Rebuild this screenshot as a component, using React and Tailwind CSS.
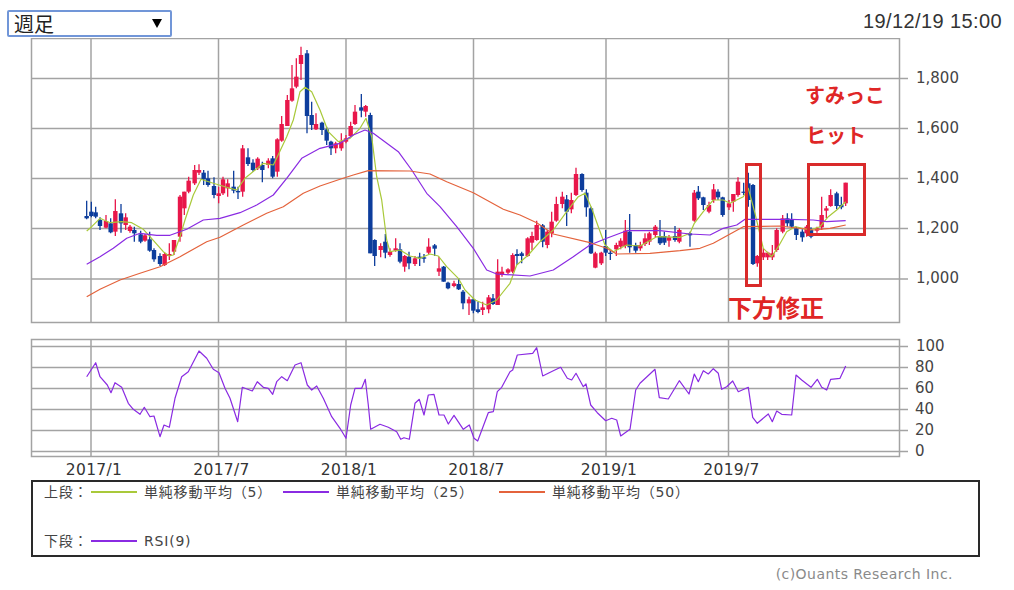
import React from "react";

// values below were read off 3x crops, so each block carries its own crop offset
const crop = (ox, oy, pts) => pts.map(([x, y]) => [x / 3 + ox, y / 3 + oy]);
const cropCandles = (ox, oy, rows) =>
  rows.map(([x, hi, lo, top, bot, c]) => ({
    x: x / 3 + ox,
    hi: hi / 3 + oy,
    lo: lo / 3 + oy,
    top: top / 3 + oy,
    bot: bot / 3 + oy,
    c,
  }));

const candles = [
  ...cropCandles(0, 130, [
    [260, 212, 268, 258, 265, "b"], [274, 215, 262, 245, 258, "b"], [287, 230, 265, 247, 260, "b"],
    [300, 262, 300, 270, 288, "b"], [318, 255, 295, 273, 293, "r"], [332, 265, 310, 280, 307, "b"],
    [346, 208, 318, 243, 305, "r"], [363, 222, 308, 250, 280, "b"], [377, 250, 300, 262, 285, "r"],
    [390, 285, 308, 290, 303, "r"], [403, 290, 335, 300, 310, "b"], [422, 302, 340, 313, 335, "b"],
    [435, 312, 335, 316, 332, "r"], [449, 305, 365, 328, 362, "b"], [462, 355, 395, 360, 388, "b"],
    [480, 370, 408, 378, 402, "b"], [494, 368, 408, 372, 405, "r"], [508, 340, 390, 372, 378, "r"],
    [522, 330, 375, 330, 365, "r"], [540, 195, 335, 200, 320, "r"], [553, 185, 255, 185, 235, "r"],
    [566, 140, 190, 152, 185, "r"], [584, 105, 165, 120, 160, "r"], [597, 103, 135, 120, 128, "r"],
    [611, 120, 165, 128, 148, "b"], [624, 122, 170, 145, 165, "b"], [642, 142, 205, 168, 195, "b"],
    [656, 170, 220, 190, 198, "r"], [669, 140, 195, 148, 190, "r"], [683, 148, 200, 160, 175, "r"],
    [701, 122, 190, 170, 182, "b"], [714, 170, 207, 183, 187, "b"], [728, 45, 200, 55, 185, "r"],
    [744, 55, 108, 82, 102, "b"], [759, 88, 125, 98, 120, "b"], [773, 82, 120, 86, 115, "r"],
    [787, 95, 157, 105, 120, "b"], [805, 85, 115, 92, 105, "r"], [818, 78, 145, 85, 140, "b"],
  ]),
  ...cropCandles(0, 0, [
    [832, 415, 530, 418, 515, "r"], [845, 348, 425, 372, 422, "r"], [862, 285, 378, 300, 378, "r"],
    [876, 195, 305, 265, 302, "r"], [889, 175, 265, 230, 260, "r"], [903, 140, 240, 165, 192, "r"],
    [921, 150, 400, 160, 348, "b"], [935, 305, 390, 345, 375, "b"], [948, 340, 390, 372, 388, "r"],
    [966, 365, 405, 368, 390, "b"], [980, 380, 435, 388, 422, "b"], [993, 422, 465, 425, 445, "b"],
    [1007, 425, 460, 430, 445, "r"],
  ]),
  ...cropCandles(340, 0, [
    [4, 400, 452, 425, 445, "r"], [18, 405, 430, 415, 425, "r"], [32, 365, 410, 378, 408, "r"],
    [45, 315, 375, 335, 372, "r"], [64, 282, 352, 322, 332, "b"], [77, 315, 350, 318, 335, "r"],
    [91, 338, 760, 345, 760, "b"], [104, 718, 798, 720, 768, "b"], [122, 730, 772, 738, 750, "r"],
    [136, 702, 775, 725, 758, "b"], [150, 745, 770, 755, 765, "r"], [167, 715, 755, 745, 752, "r"],
    [180, 730, 790, 748, 785, "b"], [194, 765, 815, 768, 800, "r"], [207, 755, 808, 770, 790, "b"],
    [225, 768, 798, 775, 792, "r"], [239, 758, 798, 770, 775, "b"], [252, 762, 788, 772, 776, "b"],
    [266, 715, 762, 740, 758, "r"], [284, 732, 768, 736, 746, "b"], [297, 770, 828, 805, 815, "r"],
    [311, 798, 845, 800, 845, "b"], [324, 845, 868, 848, 865, "b"], [342, 842, 862, 850, 858, "r"],
    [356, 835, 870, 852, 868, "b"], [369, 870, 928, 875, 910, "b"], [387, 890, 945, 898, 910, "r"],
    [400, 895, 940, 898, 932, "b"], [414, 905, 940, 928, 936, "b"], [428, 905, 945, 922, 930, "r"],
    [446, 885, 940, 892, 928, "r"], [459, 882, 915, 895, 912, "b"], [473, 778, 915, 815, 915, "r"],
    [486, 800, 830, 815, 825, "r"], [504, 805, 822, 808, 818, "r"], [518, 760, 820, 765, 815, "r"],
    [531, 748, 795, 762, 768, "b"], [545, 755, 790, 760, 768, "b"], [563, 712, 770, 715, 768, "r"],
    [576, 695, 750, 708, 728, "r"], [590, 662, 722, 675, 720, "r"], [608, 672, 742, 676, 725, "b"],
    [622, 690, 745, 695, 735, "r"], [635, 635, 712, 665, 700, "r"], [649, 590, 665, 612, 662, "r"],
    [667, 575, 625, 590, 612, "r"], [680, 585, 678, 598, 635, "b"], [694, 578, 640, 600, 628, "r"],
    [708, 503, 588, 522, 585, "r"], [726, 520, 575, 522, 570, "b"], [739, 568, 650, 578, 622, "b"],
    [753, 620, 762, 625, 760, "b"], [766, 755, 805, 760, 803, "r"], [784, 755, 795, 758, 790, "r"],
    [797, 690, 768, 738, 758, "b"], [811, 748, 780, 758, 762, "b"], [829, 728, 768, 735, 748, "r"],
    [842, 715, 748, 722, 740, "r"], [856, 660, 745, 692, 738, "r"], [869, 642, 758, 695, 742, "b"],
    [887, 728, 758, 735, 752, "b"], [901, 725, 752, 735, 745, "r"], [915, 700, 738, 715, 732, "r"],
    [928, 695, 735, 700, 725, "r"], [946, 675, 712, 680, 705, "r"], [960, 660, 735, 708, 730, "b"],
    [973, 695, 735, 708, 728, "b"], [987, 705, 740, 712, 722, "r"], [1005, 678, 725, 708, 720, "b"],
    [1018, 685, 730, 690, 725, "r"],
  ]),
  ...cropCandles(680, 0, [
    [30, 695, 740, 700, 706, "b"], [43, 570, 665, 578, 662, "r"], [55, 558, 600, 575, 595, "b"],
    [70, 590, 630, 592, 615, "b"], [87, 605, 640, 615, 635, "r"], [101, 552, 608, 568, 600, "r"],
    [114, 568, 600, 575, 592, "b"], [128, 590, 650, 592, 645, "b"], [147, 600, 630, 610, 622, "r"],
    [160, 582, 635, 582, 605, "r"], [174, 532, 590, 545, 585, "r"], [191, 548, 585, 575, 578, "b"],
    [205, 518, 620, 550, 600, "b"], [219, 552, 795, 555, 792, "b"], [232, 765, 800, 768, 790, "r"],
    [250, 745, 780, 758, 772, "r"], [263, 755, 780, 758, 772, "r"], [277, 735, 780, 760, 772, "r"],
    [290, 685, 755, 690, 750, "r"], [308, 645, 700, 655, 695, "r"], [322, 640, 680, 655, 670, "b"],
    [335, 640, 685, 660, 680, "b"], [349, 680, 720, 685, 705, "b"], [367, 688, 725, 695, 712, "b"],
    [380, 675, 710, 680, 700, "r"], [393, 682, 715, 690, 710, "b"], [411, 680, 698, 685, 692, "r"],
    [425, 590, 690, 645, 682, "r"], [439, 618, 655, 625, 632, "r"], [452, 568, 620, 585, 618, "r"],
    [470, 575, 628, 580, 618, "b"], [484, 590, 628, 615, 622, "b"], [497, 548, 618, 548, 610, "r"],
  ]),
];

const ma5 = [
  ...crop(0, 130, [[260, 303], [275, 290], [300, 265], [330, 278], [365, 275], [395, 278], [430, 298], [450, 320], [490, 365], [508, 378], [520, 375], [540, 320], [555, 270], [580, 195], [603, 148], [640, 160], [680, 172], [710, 180], [735, 145], [790, 100], [820, 105]]),
  ...crop(0, 0, [[832, 470], [860, 410], [880, 360], [900, 275], [915, 262], [935, 275], [960, 330], [985, 395], [1015, 425]]),
  ...crop(340, 0, [[30, 415], [60, 385], [78, 355], [95, 410], [110, 530], [125, 600], [140, 720], [150, 755], [180, 750], [210, 768], [240, 775], [270, 762], [295, 768], [320, 800], [355, 835], [375, 870], [405, 900], [440, 915], [470, 900], [510, 850], [530, 795], [565, 765], [600, 725], [640, 690], [680, 635], [715, 590], [735, 580], [755, 625], [775, 680], [795, 735], [820, 755], [860, 735], [900, 738], [950, 710], [1020, 712]]),
  ...crop(680, 0, [[30, 700], [43, 670], [70, 635], [100, 600], [130, 600], [150, 610], [190, 590], [205, 565], [225, 640], [250, 745], [275, 770], [295, 740], [320, 695], [345, 680], [390, 690], [420, 680], [445, 650], [470, 630], [497, 605]]),
];

const ma25 = [
  ...crop(0, 130, [[260, 403], [300, 380], [340, 355], [380, 325], [420, 310], [470, 316], [510, 316], [560, 298], [610, 270], [660, 265], [720, 248], [770, 225], [820, 195], [860, 145], [905, 85], [960, 55], [1020, 40]]),
  ...crop(340, 0, [[40, 405], [75, 390], [100, 400], [175, 455], [215, 510], [260, 580], [300, 620], [350, 680], [400, 745], [440, 810], [470, 822], [570, 828], [640, 810], [700, 770], [750, 735], [800, 715], [860, 692], [960, 692]]),
  ...crop(680, 0, [[30, 702], [90, 705], [130, 685], [170, 675], [195, 658], [330, 658], [400, 660], [440, 665], [497, 662]]),
];

const ma50 = [
  ...crop(0, 130, [[260, 500], [300, 478], [360, 450], [420, 430], [480, 410], [540, 380], [620, 335], [660, 322], [730, 285], [800, 250], [850, 230], [910, 190], [960, 168], [1020, 148]]),
  ...crop(340, 0, [[40, 525], [85, 512], [210, 513], [270, 522], [320, 545], [400, 578], [490, 628], [540, 645], [590, 668], [640, 702], [750, 728], [800, 745], [830, 762], [930, 760], [1020, 752]]),
  ...crop(680, 0, [[60, 745], [100, 730], [190, 680], [300, 678], [400, 690], [450, 685], [497, 675]]),
];

const rsi = [
  ...crop(0, 330, [[260, 140], [287, 98], [300, 140], [322, 165], [333, 188], [345, 158], [365, 172], [385, 220], [400, 238], [420, 253], [433, 232], [450, 260], [462, 258], [480, 320], [492, 285], [508, 292], [525, 205], [545, 140], [565, 125], [597, 63], [620, 85], [640, 118], [657, 128], [675, 175], [690, 205], [713, 275], [727, 172], [757, 183], [772, 155], [790, 172], [805, 175], [818, 193], [830, 155], [845, 140], [862, 152], [885, 105], [903, 98], [922, 165], [935, 180], [950, 168], [970, 205], [995, 260], [1020, 295]]),
  ...crop(340, 330, [[18, 325], [32, 225], [45, 175], [65, 175], [76, 148], [85, 225], [92, 298], [120, 283], [145, 292], [170, 305], [182, 328], [192, 323], [208, 328], [225, 220], [238, 208], [252, 255], [265, 195], [282, 193], [297, 255], [312, 255], [325, 282], [342, 256], [370, 298], [388, 285], [402, 325], [413, 333], [445, 248], [460, 245], [472, 185], [485, 172], [510, 125], [518, 120], [532, 75], [578, 70], [590, 53], [608, 138], [640, 122], [662, 112], [682, 145], [695, 150], [708, 130], [730, 170], [738, 162], [752, 225], [772, 248], [797, 272], [815, 265], [830, 270], [842, 318], [870, 298], [887, 180], [900, 160], [945, 118], [958, 203], [985, 207], [1018, 152]]),
  ...crop(680, 330, [[27, 192], [43, 132], [55, 155], [70, 122], [85, 132], [100, 116], [115, 130], [125, 178], [140, 170], [158, 153], [175, 185], [205, 172], [218, 262], [232, 280], [265, 252], [277, 275], [290, 243], [305, 253], [335, 255], [348, 135], [365, 150], [393, 172], [412, 148], [425, 172], [440, 180], [452, 148], [480, 145], [497, 108]]),
];

const toPoints = (pts) => pts.map(([x, y]) => `${x.toFixed(1)},${y.toFixed(1)}`).join(" ");

const GRID = "#a3a3a3";
const GREEN = "#a9c93a";
const PURPLE = "#8a2be2";
const ORANGE = "#e4633c";
const AXIS_FONT = { fontFamily: "'DejaVu Sans', sans-serif" };

const gridX = [91, 218.5, 346, 473.5, 606, 728.5];
const priceY = [
  [78.5, "1,800"],
  [128.5, "1,600"],
  [178.5, "1,400"],
  [228.5, "1,200"],
  [279, "1,000"],
];
const rsiY = [
  [346.5, "100"],
  [367.5, "80"],
  [388.5, "60"],
  [409.5, "40"],
  [430.5, "20"],
  [451.5, "0"],
];
const dateLabels = ["2017/1", "2017/7", "2018/1", "2018/7", "2019/1", "2019/7"];

const Line = ({ pts, color }) => (
  <polyline points={toPoints(pts)} fill="none" stroke={color} strokeWidth="1.2" strokeLinejoin="round" />
);

const PriceChart = () => (
  <svg viewBox="0 38 1014 286" className="block w-[1014px] h-[286px]">
    <rect x="31.5" y="38.5" width="868" height="284" fill="#fff" stroke={GRID} strokeWidth="1.5" />
    {gridX.map((x) => (
      <line key={x} x1={x} x2={x} y1="38" y2="322" stroke={GRID} strokeWidth="1.5" />
    ))}
    {priceY.map(([y, label]) => (
      <g key={label}>
        <line x1="31" x2="908" y1={y} y2={y} stroke={GRID} strokeWidth="1.5" />
        <text x="916" y={y + 4} fontSize="15" fill="#444" style={AXIS_FONT}>{label}</text>
      </g>
    ))}
    {candles.map((k, i) => {
      const color = k.c === "r" ? "#e8174a" : "#0d3d9c";
      return (
        <g key={i}>
          <line x1={k.x} x2={k.x} y1={k.hi} y2={k.lo} stroke={color} strokeWidth="1.3" />
          <rect x={k.x - 2.2} y={k.top} width="4.4" height={Math.max(k.bot - k.top, 1.2)} fill={color} />
        </g>
      );
    })}
    <Line pts={ma5} color={GREEN} />
    <Line pts={ma25} color={PURPLE} />
    <Line pts={ma50} color={ORANGE} />
  </svg>
);

const RsiChart = () => (
  <svg viewBox="0 337 1014 141" className="block w-[1014px] h-[141px]">
    <rect x="31.5" y="339.5" width="868" height="117" fill="#fff" stroke={GRID} strokeWidth="1.5" />
    {gridX.map((x, i) => (
      <g key={x}>
        <line x1={x} x2={x} y1="339" y2="457" stroke={GRID} strokeWidth="1.5" />
        <text x={x + 3} y="475" textAnchor="middle" fontSize="15.5" letterSpacing="0.3" fill="#333" style={AXIS_FONT}>
          {dateLabels[i]}
        </text>
      </g>
    ))}
    {rsiY.map(([y, label]) => (
      <g key={label}>
        <line x1="31" x2="908" y1={y} y2={y} stroke={GRID} strokeWidth="1.5" />
        <text x={label === "100" ? 916 : 915} y={y + 4.5} fontSize="15" fill="#444" style={AXIS_FONT}>{label}</text>
      </g>
    ))}
    <Line pts={rsi} color={PURPLE} />
  </svg>
);

const LegendItem = ({ color, label, className = "" }) => (
  <div className={`flex items-center ${className}`}>
    <span className="block w-[46px] h-[1.5px]" style={{ backgroundColor: color }} />
    <span className="ml-[7px] whitespace-nowrap">{label}</span>
  </div>
);

const Legend = () => (
  <div className="ml-[31px] mt-[2px] w-[949px] h-[77px] border-2 border-[#2a2a2a] pl-[11px] pt-[1px] text-[14px] leading-[18px] tracking-[0.8px] text-[#444] font-['DejaVu_Sans','Noto_Sans_CJK_JP',sans-serif]">
    <div className="flex items-center">
      <span className="w-[47px] shrink-0">上段：</span>
      <LegendItem color={GREEN} label="単純移動平均（5）" className="w-[192px]" />
      <LegendItem color={PURPLE} label="単純移動平均（25）" className="w-[216px]" />
      <LegendItem color={ORANGE} label="単純移動平均（50）" />
    </div>
    <div className="flex items-center mt-[31px]">
      <span className="w-[47px] shrink-0">下段：</span>
      <LegendItem color={PURPLE} label="RSI(9)" />
    </div>
  </div>
);

const App = () => (
  <div className="relative w-[1014px] h-[590px] bg-white overflow-hidden">
    <header className="relative z-10 h-[38px] flex justify-between items-start pl-[7px] pr-[12px] pt-[10px]">
      <div className="relative w-[165px] h-[27px] bg-white border-2 border-[#7196d8] rounded-[2px]">
        <span className="absolute left-[5px] top-[-2px] text-[20px] leading-[28px] text-[#222] font-['Noto_Sans_CJK_JP',sans-serif]">週足</span>
        <span className="absolute left-[143px] top-[7px] w-0 h-0 border-x-[5px] border-x-transparent border-t-[9px] border-t-black" />
      </div>
      <span className="text-[20px] leading-[22px] tracking-[0.4px] text-[#333] font-['Liberation_Sans',sans-serif]">19/12/19 15:00</span>
    </header>

    <div className="relative">
      <PriceChart />
      {/* hand-drawn notes on top of the chart */}
      <span className="absolute left-[805px] top-[44px] text-[20px] leading-[26px] font-bold text-[#df2626] whitespace-nowrap font-['Noto_Sans_CJK_JP',sans-serif]">すみっこ</span>
      <span className="absolute left-[806px] top-[84px] text-[20px] leading-[26px] font-bold text-[#df2626] whitespace-nowrap font-['Noto_Sans_CJK_JP',sans-serif]">ヒット</span>
      <span className="absolute left-[728px] top-[254px] text-[24px] leading-[30px] font-bold text-[#df2626] whitespace-nowrap font-['Noto_Sans_CJK_JP',sans-serif]">下方修正</span>
      <div className="absolute left-[745px] top-[125px] w-[17px] h-[124px] border-[3px] border-[#d92a2a]" />
      <div className="absolute left-[807px] top-[125px] w-[59px] h-[73px] border-[3px] border-[#d92a2a]" />
    </div>

    <div className="mt-[13px]">
      <RsiChart />
    </div>
    <Legend />
    <div className="mt-[8px] pr-[61px] text-right text-[14px] leading-[18px] tracking-[0.45px] text-[#8a8a8a] font-['DejaVu_Sans',sans-serif]">
      (c)Ouants Research Inc.
    </div>
  </div>
);

export default App;
